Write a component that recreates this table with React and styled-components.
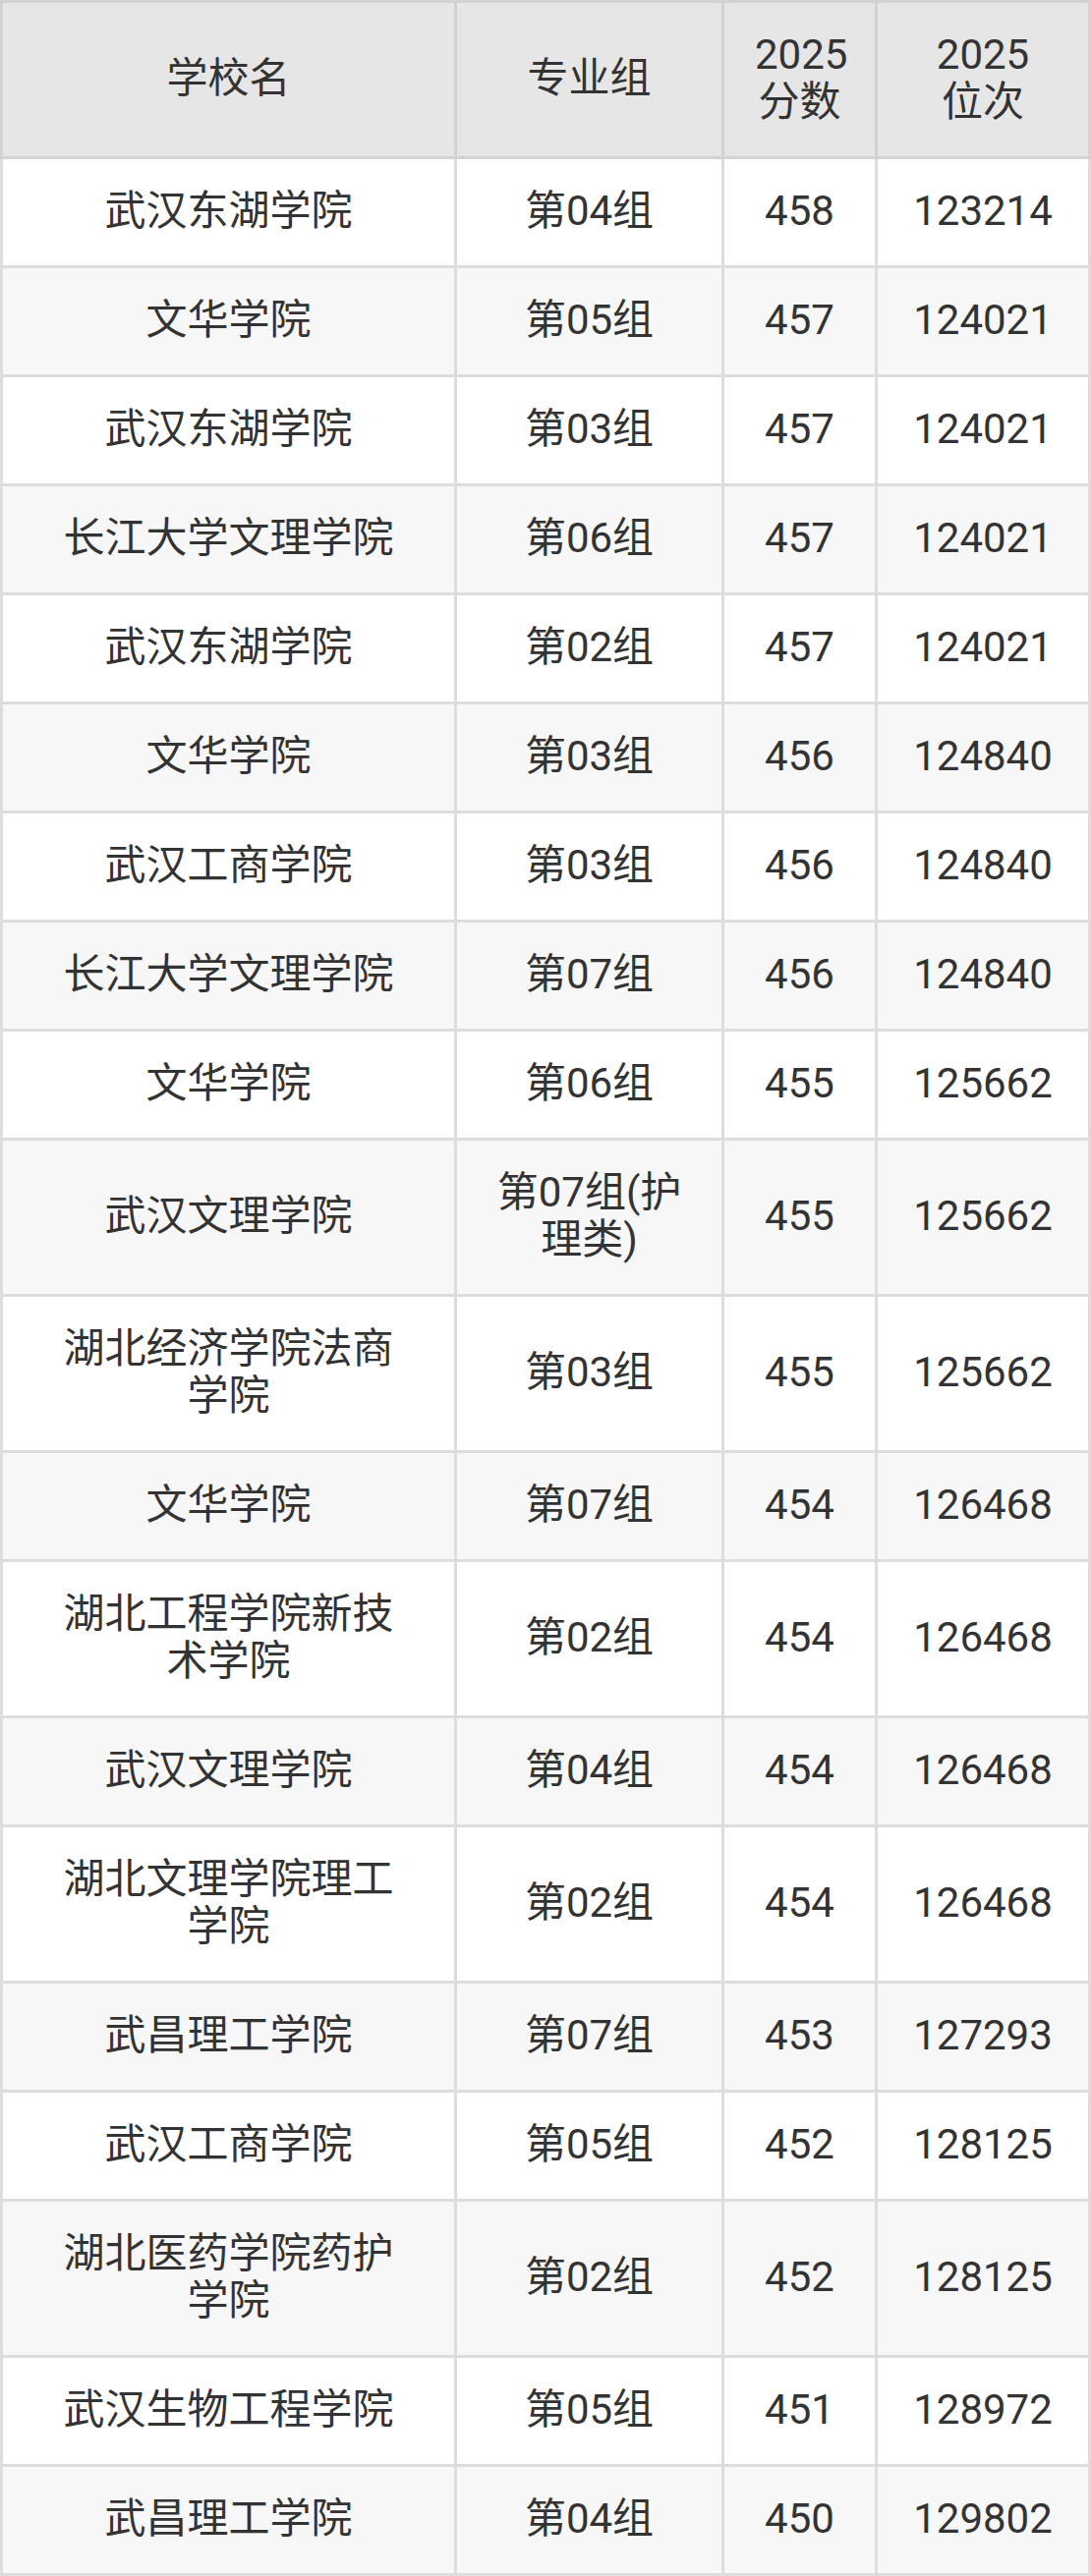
import React from 'react';
import styled, { createGlobalStyle } from 'styled-components';

const GlobalStyle = createGlobalStyle`
  * {
    box-sizing: border-box;
  }
  html, body {
    margin: 0;
    padding: 0;
    background: #ffffff;
  }
  body {
    font-family: Roboto, "Noto Sans CJK SC", sans-serif;
    color: #333333;
  }
`;

const ScoreTable = styled.table`
  width: 1110px;
  table-layout: fixed;
  border-collapse: separate;
  border-spacing: 0;
  font-size: 42px;
  line-height: 48px;
  color: #333333;

  th, td {
    padding: 29px 31px 31px;
    text-align: center;
    vertical-align: middle;
    font-weight: 400;
    border-right: 3px solid #dddddd;
    border-bottom: 3px solid #dddddd;
  }
  th:first-child, td:first-child {
    padding-left: 50px;
    padding-right: 50px;
    border-left: 3px solid #dddddd;
  }
  th {
    background: #e6e6e6;
    border-color: #d2d2d2;
    border-top: 3px solid #d2d2d2;
  }
  th:first-child {
    border-left-color: #d2d2d2;
  }
  tbody tr:nth-child(odd) td {
    background: #ffffff;
  }
  tbody tr:nth-child(even) td {
    background: #f7f7f7;
  }
`;

const HeadCell = styled.th`
  width: ${props => props.$w}px;
`;

const rows = [
  ['武汉东湖学院', '第04组', '458', '123214'],
  ['文华学院', '第05组', '457', '124021'],
  ['武汉东湖学院', '第03组', '457', '124021'],
  ['长江大学文理学院', '第06组', '457', '124021'],
  ['武汉东湖学院', '第02组', '457', '124021'],
  ['文华学院', '第03组', '456', '124840'],
  ['武汉工商学院', '第03组', '456', '124840'],
  ['长江大学文理学院', '第07组', '456', '124840'],
  ['文华学院', '第06组', '455', '125662'],
  ['武汉文理学院', '第07组(护理类)', '455', '125662'],
  ['湖北经济学院法商学院', '第03组', '455', '125662'],
  ['文华学院', '第07组', '454', '126468'],
  ['湖北工程学院新技术学院', '第02组', '454', '126468'],
  ['武汉文理学院', '第04组', '454', '126468'],
  ['湖北文理学院理工学院', '第02组', '454', '126468'],
  ['武昌理工学院', '第07组', '453', '127293'],
  ['武汉工商学院', '第05组', '452', '128125'],
  ['湖北医药学院药护学院', '第02组', '452', '128125'],
  ['武汉生物工程学院', '第05组', '451', '128972'],
  ['武昌理工学院', '第04组', '450', '129802'],
];

export default function App() {
  return (
    <>
      <GlobalStyle />
      <ScoreTable>
        <thead>
          <tr>
            <HeadCell $w={465}>学校名</HeadCell>
            <HeadCell $w={272}>专业组</HeadCell>
            <HeadCell $w={156}>2025<br />分数</HeadCell>
            <HeadCell $w={217}>2025<br />位次</HeadCell>
          </tr>
        </thead>
        <tbody>
          {rows.map((r, i) => (
            <tr key={i}>
              <td>{r[0]}</td>
              <td>{r[1]}</td>
              <td>{r[2]}</td>
              <td>{r[3]}</td>
            </tr>
          ))}
        </tbody>
      </ScoreTable>
    </>
  );
}
